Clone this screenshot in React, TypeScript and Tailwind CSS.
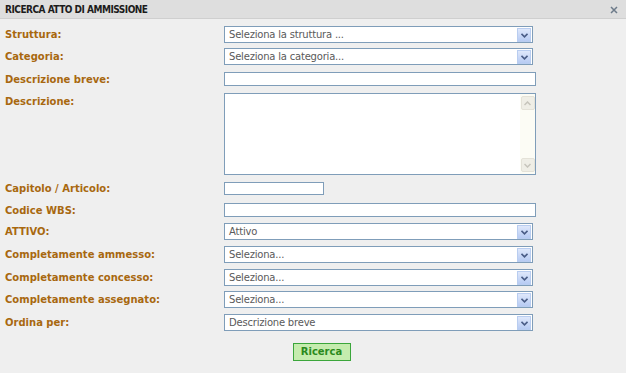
import React from "react";

const font = { fontFamily: '"DejaVu Sans", Verdana, sans-serif' };
const condensed = { fontFamily: '"DejaVu Sans Condensed", "DejaVu Sans", sans-serif' };

function Arrow() {
    return (
        <div className="absolute right-[1px] top-[1px] w-[14px] h-[14px] border border-[#b9cdf0] bg-gradient-to-b from-[#dfe8fb] to-[#b7cbf3] flex items-center justify-center">
            <svg width="7" height="5" viewBox="0 0 7 5">
                <path d="M0.5 0.8 L3.5 3.8 L6.5 0.8" stroke="#4a5d87" strokeWidth="1.6" fill="none" />
            </svg>
        </div>
    )
}

function FakeSelect({ value }: { value: string }) {
    return (
        <div className="relative w-[309px] h-[17px] border border-[#7f9db9] bg-white">
            <div className="pl-[4px] text-[10px] leading-[15px] text-[#5a5a5a] tracking-[-0.2px]">{value}</div>
            <Arrow />
        </div>
    )
}

function Row({ label, mt, children, top }: { label: string, mt: string, children: React.ReactNode, top?: boolean }) {
    return (
        <div className={`flex ${top ? "items-start" : "items-center"} ${mt}`}>
            <div className={`w-[224px] pl-[5px] text-[10px] font-bold text-[#a8680f] leading-[13px] ${top ? "pt-[2px]" : ""}`}>{label}</div>
            {children}
        </div>
    )
}

export default function App() {
    return (
        <div className="w-[626px] h-[373px] bg-[#efefef] overflow-hidden" style={font}>
            <div className="h-[19px] bg-[#dedede] border-b border-[#cfcfcf] flex items-center pl-[5px] pr-[8px]">
                <div className="text-[10px] font-bold text-[#1c1c1c] flex-grow tracking-[-0.5px]" style={condensed}>RICERCA ATTO DI AMMISSIONE</div>
                <svg width="8" height="8" viewBox="0 0 8 8" className="mt-[2px]">
                    <path d="M1 1 L7 7 M7 1 L1 7" stroke="#6d7b8a" strokeWidth="1.5" />
                </svg>
            </div>

            <Row label="Struttura:" mt="mt-[7px]">
                <FakeSelect value="Seleziona la struttura ..." />
            </Row>
            <Row label="Categoria:" mt="mt-[5px]">
                <FakeSelect value="Seleziona la categoria..." />
            </Row>
            <Row label="Descrizione breve:" mt="mt-[7px]">
                <div className="w-[312px] h-[14px] border border-[#7f9db9] bg-white"></div>
            </Row>
            <Row label="Descrizione:" mt="mt-[7px]" top>
                <div className="w-[312px] h-[82px] border border-[#7f9db9] bg-white flex justify-end">
                    <div className="w-[15px] h-full bg-[#fcfcf5] flex flex-col justify-between items-center py-[2px]">
                        <div className="w-[14px] h-[14px] bg-[#efeee6] border border-[#e4e2d8] rounded-[2px] flex items-center justify-center">
                            <svg width="7" height="5" viewBox="0 0 7 5">
                                <path d="M0.5 4 L3.5 1 L6.5 4" stroke="#c6c4bb" strokeWidth="1.5" fill="none" />
                            </svg>
                        </div>
                        <div className="w-[14px] h-[14px] bg-[#efeee6] border border-[#e4e2d8] rounded-[2px] flex items-center justify-center">
                            <svg width="7" height="5" viewBox="0 0 7 5">
                                <path d="M0.5 1 L3.5 4 L6.5 1" stroke="#c6c4bb" strokeWidth="1.5" fill="none" />
                            </svg>
                        </div>
                    </div>
                </div>
            </Row>
            <Row label="Capitolo / Articolo:" mt="mt-[7px]">
                <div className="w-[100px] h-[13px] border border-[#7f9db9] bg-white"></div>
            </Row>
            <Row label="Codice WBS:" mt="mt-[8px]">
                <div className="w-[312px] h-[14px] border border-[#7f9db9] bg-white"></div>
            </Row>
            <Row label="ATTIVO:" mt="mt-[6px]">
                <FakeSelect value="Attivo" />
            </Row>
            <Row label="Completamente ammesso:" mt="mt-[6px]">
                <FakeSelect value="Seleziona..." />
            </Row>
            <Row label="Completamente concesso:" mt="mt-[6px]">
                <FakeSelect value="Seleziona..." />
            </Row>
            <Row label="Completamente assegnato:" mt="mt-[5px]">
                <FakeSelect value="Seleziona..." />
            </Row>
            <Row label="Ordina per:" mt="mt-[6px]">
                <FakeSelect value="Descrizione breve" />
            </Row>

            <div className="flex justify-center mt-[12px] pl-[17px]">
                <button className="w-[58px] h-[18px] bg-[#c5ecae] border border-[#3ba63b] text-[10px] font-bold text-[#2a8a1c] leading-[16px]" style={font}>
                    Ricerca
                </button>
            </div>
        </div>
    )
}
